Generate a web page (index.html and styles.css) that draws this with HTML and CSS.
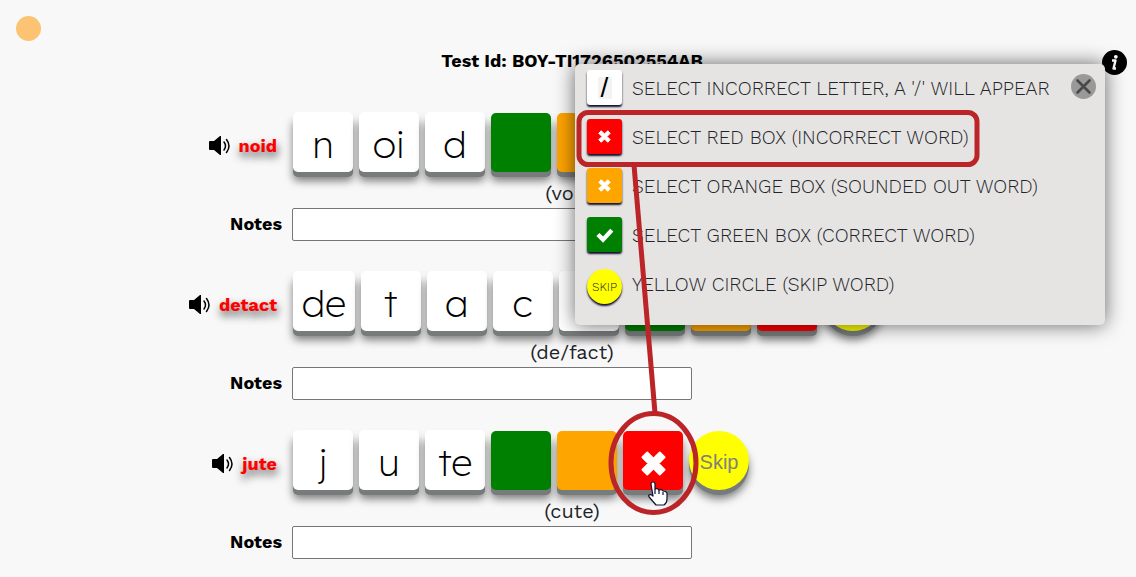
FILE: index.html
```
<!DOCTYPE html>
<html lang="en">
  <head>
    <meta charset="utf-8" />
    <title>Word Test</title>
    <link rel="stylesheet" href="styles.css">
  </head>
  <body>
    <!-- shared icons -->
    <svg class="icon-defs" aria-hidden="true">
      <symbol id="speaker" viewBox="0 0 21 20">
        <path d="M0 6q0-1 1-1h4l6-5h1v19h-1l-6-5H1q-1 0-1-1z" />
        <path d="M15 6q3 4 0 8M17.500 3.500q5 6.500 0 13" fill="none" stroke="#000" stroke-width="1.500" stroke-linecap="round" />
      </symbol>
      <symbol id="cross" viewBox="0 0 26 26">
        <path d="M1.500 6.500l5-5L13 8l6.500-6.500 5 5L18 13l6.500 6.500-5 5L13 18l-6.500 6.500-5-5L8 13z" fill="#fff" stroke="#fff" stroke-width="2" stroke-linejoin="round" />
      </symbol>
      <symbol id="check" viewBox="0 0 26 26">
        <path d="M4 13l7 7L23 7" fill="none" stroke="#fff" stroke-width="6" />
      </symbol>
    </svg>

    <span class="status-dot"></span>

    <main class="page">
      <h1 class="test-id">Test Id: BOY-TI1726502554AB</h1>

      <section class="word">
        <div class="word-label">
          <button class="sound" aria-label="Play noid"><svg><use href="#speaker" /></svg></button>
          <span class="word-name">noid</span>
        </div>
        <div class="tiles">
          <button class="tile">n</button>
          <button class="tile">oi</button>
          <button class="tile">d</button>
          <button class="tile mark green" aria-label="Correct"></button>
          <button class="tile mark orange" aria-label="Sounded out"></button>
          <button class="tile mark red" aria-label="Incorrect"></button>
          <button class="tile mark skip">Skip</button>
        </div>
        <p class="hint">(void)</p>
        <label class="notes-label" for="notes-1">Notes</label>
        <input class="notes" id="notes-1" type="text" />
      </section>

      <section class="word">
        <div class="word-label">
          <button class="sound" aria-label="Play detact"><svg><use href="#speaker" /></svg></button>
          <span class="word-name">detact</span>
        </div>
        <div class="tiles">
          <button class="tile">de</button>
          <button class="tile">t</button>
          <button class="tile">a</button>
          <button class="tile">c</button>
          <button class="tile">t</button>
          <button class="tile mark green" aria-label="Correct"></button>
          <button class="tile mark orange" aria-label="Sounded out"></button>
          <button class="tile mark red" aria-label="Incorrect"></button>
          <button class="tile mark skip">Skip</button>
        </div>
        <p class="hint">(de/fact)</p>
        <label class="notes-label" for="notes-2">Notes</label>
        <input class="notes" id="notes-2" type="text" />
      </section>

      <section class="word">
        <div class="word-label">
          <button class="sound" aria-label="Play jute"><svg><use href="#speaker" /></svg></button>
          <span class="word-name">jute</span>
        </div>
        <div class="tiles">
          <button class="tile">j</button>
          <button class="tile">u</button>
          <button class="tile">te</button>
          <button class="tile mark green" aria-label="Correct"></button>
          <button class="tile mark orange" aria-label="Sounded out"></button>
          <button class="tile mark red" aria-label="Incorrect"><svg><use href="#cross" /></svg></button>
          <button class="tile mark skip">Skip</button>
        </div>
        <p class="hint">(cute)</p>
        <label class="notes-label" for="notes-3">Notes</label>
        <input class="notes" id="notes-3" type="text" />
      </section>
    </main>

    <button class="info" aria-label="Info">
      <svg viewBox="0 0 25 25">
        <circle cx="12.500" cy="12.500" r="12.500" />
        <circle cx="13.800" cy="6.800" r="1.900" fill="#fff" />
        <path d="M10 10.500h3.500l-2 8h2.500" fill="none" stroke="#fff" stroke-width="2.400" stroke-linejoin="round" />
      </svg>
    </button>

    <aside class="legend">
      <ul>
        <li><span class="key key-letter"><i>/</i></span>SELECT INCORRECT LETTER, A '/' WILL APPEAR</li>
        <li><span class="key red"><svg><use href="#cross" /></svg></span>SELECT RED BOX (INCORRECT WORD)</li>
        <li><span class="key orange"><svg><use href="#cross" /></svg></span>SELECT ORANGE BOX (SOUNDED OUT WORD)</li>
        <li><span class="key green"><svg><use href="#check" /></svg></span>SELECT GREEN BOX (CORRECT WORD)</li>
        <li><span class="key key-skip">SKIP</span>YELLOW CIRCLE (SKIP WORD)</li>
      </ul>
      <button class="close" aria-label="Close">
        <svg viewBox="0 0 25 25">
          <circle cx="12.500" cy="12.500" r="12.500" fill="#999" />
          <path d="M6.500 6.500l12 12M18.500 6.500l-12 12" stroke="#484848" stroke-width="2.600" stroke-linecap="round" />
        </svg>
      </button>

      <!-- callout from the red box row to the red tile -->
      <svg class="callout" viewBox="0 0 530 460" aria-hidden="true">
        <g fill="none" stroke="#bb2528" stroke-width="5">
          <rect x="4" y="48.500" width="398" height="52" rx="9" />
          <path d="M59 101L80 349" />
          <ellipse cx="78.500" cy="399" rx="42.500" ry="49.500" />
        </g>
        <path d="M78 420q0-2 2-2t2 2v5q3-1 4 1q3-1 4 1q3 0 4 2v6q0 4-3 6h-8l-6-7q-2-2-1-3q2-1 4 1z" transform="translate(-2)" fill="#fff" stroke="#101030" stroke-width="1.200" stroke-linejoin="round" />
        <path d="M80 425v5M84 426v4M88 428v3" stroke="#101030" stroke-width="1.200" />
      </svg>
    </aside>
  </body>
</html>
```

FILE: styles.css
```
* {
  box-sizing: border-box;
}

body {
  margin: 0;
  background: #f8f8f8;
  color: #212529;
  font-family: "Work Sans", Inter, "Liberation Sans", sans-serif;
  font-size: 18px;
  font-weight: 300;
  line-height: 24px;
  position: relative;
  overflow-x: hidden;
}

button {
  border: 0;
  padding: 0;
  background: none;
  font: inherit;
  cursor: pointer;
}

.icon-defs {
  display: none;
}

.status-dot {
  position: absolute;
  top: 16px;
  left: 16px;
  width: 25px;
  height: 25px;
  border-radius: 50%;
  background: #fcc372;
}

/* Test */

.page {
  padding: 49px 0 16px 8px;
}

.test-id {
  margin: 0 0 39px;
  color: #000;
  font-size: 18px;
  font-weight: 700;
  line-height: 24px;
  text-align: center;
}

.word {
  display: grid;
  grid-template-columns: 25% 1fr;
  margin-bottom: 30px;
}

.word:last-child {
  margin-bottom: 0;
}

.word-label {
  display: flex;
  justify-content: flex-end;
  align-items: center;
  gap: 9px;
  padding: 7px 13px 0 0;
}

.sound,
.sound svg {
  display: block;
  width: 21px;
  height: 20px;
}

.word-name {
  color: #f00;
  font-size: 18px;
  font-weight: 700;
  text-shadow: 1px 5px 8px #555;
}

.tiles {
  display: flex;
  align-items: flex-end;
}

.tile {
  min-width: 60px;
  height: 60px;
  margin: 0 3px;
  padding: 3px 9px 0;
  border-radius: 5px;
  background: #fff;
  box-shadow: 0 5px 0 #777b7b, 0 9px 8px rgba(0, 0, 0, 0.5);
  color: #000;
  font-family: "Lexend Deca", Lexend, Urbanist, Outfit, Quicksand, Lato, sans-serif;
  font-size: 38px;
  font-weight: 200;
}

.tile svg {
  display: block;
  width: 25px;
  height: 25px;
  margin: 2px auto 0;
}

.mark {
  height: 59px;
}

.green {
  background: green;
}

.orange {
  background: orange;
}

.red {
  background: red;
}

.skip {
  border-radius: 50%;
  background: yellow;
  color: gray;
  font-family: "Liberation Sans", Arial, sans-serif;
  font-size: 20px;
  font-weight: 400;
}

.hint {
  grid-column: 1 / -1;
  margin: 9px 0 3px;
  font-size: 20px;
  font-weight: 400;
  text-align: center;
}

.notes-label {
  padding-right: 8px;
  color: #000;
  font-size: 18px;
  font-weight: 700;
  line-height: 32px;
  text-align: right;
}

.notes {
  width: 400px;
  height: 33px;
  margin-left: 2px;
  padding: 4px 8px;
  border: 1px solid #767676;
  border-radius: 2px;
  background: #fff;
  font: inherit;
}

/* Legend popup */

.info,
.close {
  position: absolute;
  width: 25px;
  height: 25px;
}

.info {
  top: 50px;
  right: 9px;
}

.info svg,
.close svg {
  display: block;
}

.legend {
  position: absolute;
  top: 64px;
  right: 31px;
  width: 530px;
  height: 261px;
  border-radius: 5px;
  background: #e6e4e3;
  box-shadow: 0 0 20px rgba(0, 0, 0, 0.6);
}

.legend ul {
  margin: 0;
  padding: 0 12px;
  list-style: none;
}

.legend li {
  display: flex;
  align-items: center;
  gap: 10px;
  height: 49px;
  font-size: 19px;
  white-space: nowrap;
}

.key {
  display: flex;
  justify-content: center;
  align-items: center;
  width: 35px;
  height: 35px;
  margin-bottom: 2px;
  border-radius: 3px;
  box-shadow: 0 2px 2px #101030;
}

.key svg {
  width: 13px;
  height: 13px;
}

.key.green svg {
  width: 19px;
  height: 19px;
}

.key-letter {
  background: #fff;
}

.key-letter i {
  width: 14px;
  background: #f3f3f3;
  color: #000;
  font-family: "Liberation Sans", Arial, sans-serif;
  font-size: 28px;
  font-style: normal;
  font-weight: 400;
  line-height: 22px;
  text-align: center;
}

.key-skip {
  margin: 4px 0 0;
  border-radius: 50%;
  background: yellow;
  font-size: 12px;
  font-weight: 300;
}

.close {
  top: 10px;
  right: 9px;
}

.callout {
  position: absolute;
  top: 0;
  left: 0;
  width: 530px;
  height: 460px;
  pointer-events: none;
  overflow: visible;
}
```
